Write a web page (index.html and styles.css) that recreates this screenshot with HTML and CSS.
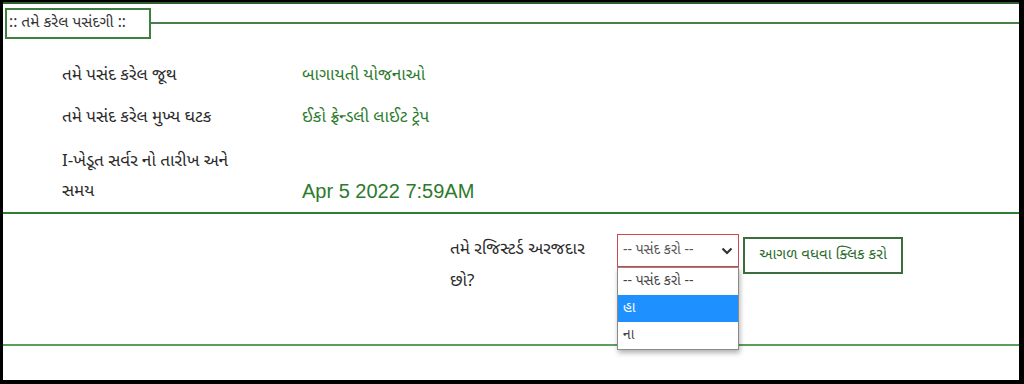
FILE: index.html
```html
<!DOCTYPE html>
<html lang="gu">
<head>
<meta charset="utf-8">
<title>પસંદગી</title>
<link rel="stylesheet" href="styles.css">
</head>
<body>
<div class="frame">
  <div class="page">
    <div class="head">
      <div class="legend">:: તમે કરેલ પસંદગી ::</div>
      <div class="head-line"></div>
    </div>
    <table class="info">
      <tr>
        <td class="lbl">તમે પસંદ કરેલ જૂથ</td>
        <td class="val">બાગાયતી યોજનાઓ</td>
      </tr>
      <tr>
        <td class="lbl">તમે પસંદ કરેલ મુખ્ય ઘટક</td>
        <td class="val">ઈકો ફ્રેન્ડલી લાઈટ ટ્રેપ</td>
      </tr>
      <tr>
        <td class="lbl wrap"><div class="wrap-in">I-ખેડૂત સર્વર નો તારીખ અને સમય</div></td>
        <td class="val date">Apr 5 2022 7:59AM</td>
      </tr>
    </table>
    <div class="rule"></div>
    <div class="ask">
      <div class="ask-lbl">તમે રજિસ્ટર્ડ અરજદાર છો?</div>
      <div class="sel-wrap">
        <div class="sel">
          <span>-- પસંદ કરો --</span>
          <svg class="chev" width="12" height="8" viewBox="0 0 12 8"><path d="M1.5 1.5 L6 6 L10.5 1.5" fill="none" stroke="#333" stroke-width="2.2"/></svg>
        </div>
        <ul class="drop">
          <li>-- પસંદ કરો --</li>
          <li class="on">હા</li>
          <li>ના</li>
        </ul>
      </div>
      <button class="go" type="button">આગળ વધવા ક્લિક કરો</button>
    </div>
    <div class="rule2"></div>
  </div>
</div>
</body>
</html>
```
FILE: styles.css
```css
html, body {
  margin: 0;
  padding: 0;
  background: #000;
}
body {
  font-family: "Noto Sans Gujarati", "Lohit Gujarati", "Shruti", "Liberation Sans", sans-serif;
  color: #2a2a2a;
}
.frame {
  width: 1024px;
  height: 384px;
  box-sizing: border-box;
  padding: 2px 5px 4px 3px;
  background: #000;
}
.page {
  background: #fff;
  height: 378px;
  border-top: 2px solid #2f5f2f;
  box-sizing: border-box;
  position: relative;
}
.head {
  display: flex;
  align-items: center;
  padding: 4px 0 0 2px;
}
.legend {
  border: 2px solid #3f7f3f;
  height: 27px;
  width: 140px;
  box-sizing: content-box;
  font-size: 15.5px;
  line-height: 27px;
  padding: 0 0 0 2px;
  color: #333;
  white-space: nowrap;
  overflow: hidden;
}
.head-line {
  flex: 1;
  border-top: 2px solid #4a7f4a;
  margin-top: -2px;
}
.info {
  border-collapse: collapse;
  margin: 16px 0 0 59px;
}
.info td {
  padding: 0;
  font-size: 17px;
}
.lbl {
  width: 240px;
  height: 42px;
  vertical-align: middle;
}
.lbl.wrap {
  vertical-align: top;
  line-height: 30px;
  padding-top: 8px;
}
.wrap-in {
  width: 200px;
}
.val {
  color: #2d7a2d;
  vertical-align: middle;
}
.info td.date {
  vertical-align: bottom;
  font-family: "Liberation Sans", Arial, sans-serif;
  font-size: 20px;
  padding-bottom: 4px;
}
.rule {
  height: 2px;
  background: #2e7d32;
  margin-top: 5px;
}
.ask {
  display: flex;
  align-items: flex-start;
  padding: 20px 0 0 447px;
}
.ask-lbl {
  width: 148px;
  font-size: 17px;
  line-height: 32px;
  margin-right: 19px;
}
.sel-wrap {
  position: relative;
}
.sel {
  width: 122px;
  height: 33px;
  box-sizing: border-box;
  border: 1.5px solid #d0474f;
  display: flex;
  align-items: center;
  justify-content: space-between;
  padding: 0 5px 0 5px;
  font-size: 14px;
  color: #555;
  background: #fff;
}
.chev {
  display: block;
}
.drop {
  position: absolute;
  top: 33px;
  left: 0;
  width: 122px;
  box-sizing: border-box;
  margin: 0;
  padding: 0;
  list-style: none;
  background: #fff;
  border: 1px solid #8a8a8a;
  box-shadow: 1px 3px 5px rgba(0,0,0,0.3);
  z-index: 2;
}
.drop li {
  height: 27px;
  line-height: 27px;
  padding-left: 5px;
  font-size: 14px;
  color: #444;
}
.drop li.on {
  background: #1e90ff;
  color: #fff;
}
.go {
  margin: 3px 0 0 4px;
  width: 160px;
  height: 37px;
  background: #fff;
  border: 2px solid #3a6e3a;
  color: #2a6a2a;
  font-family: inherit;
  font-size: 15px;
  padding: 0;
  text-align: center;
}
.rule2 {
  height: 2px;
  background: #5aa05a;
  margin-top: 46px;
}
```
